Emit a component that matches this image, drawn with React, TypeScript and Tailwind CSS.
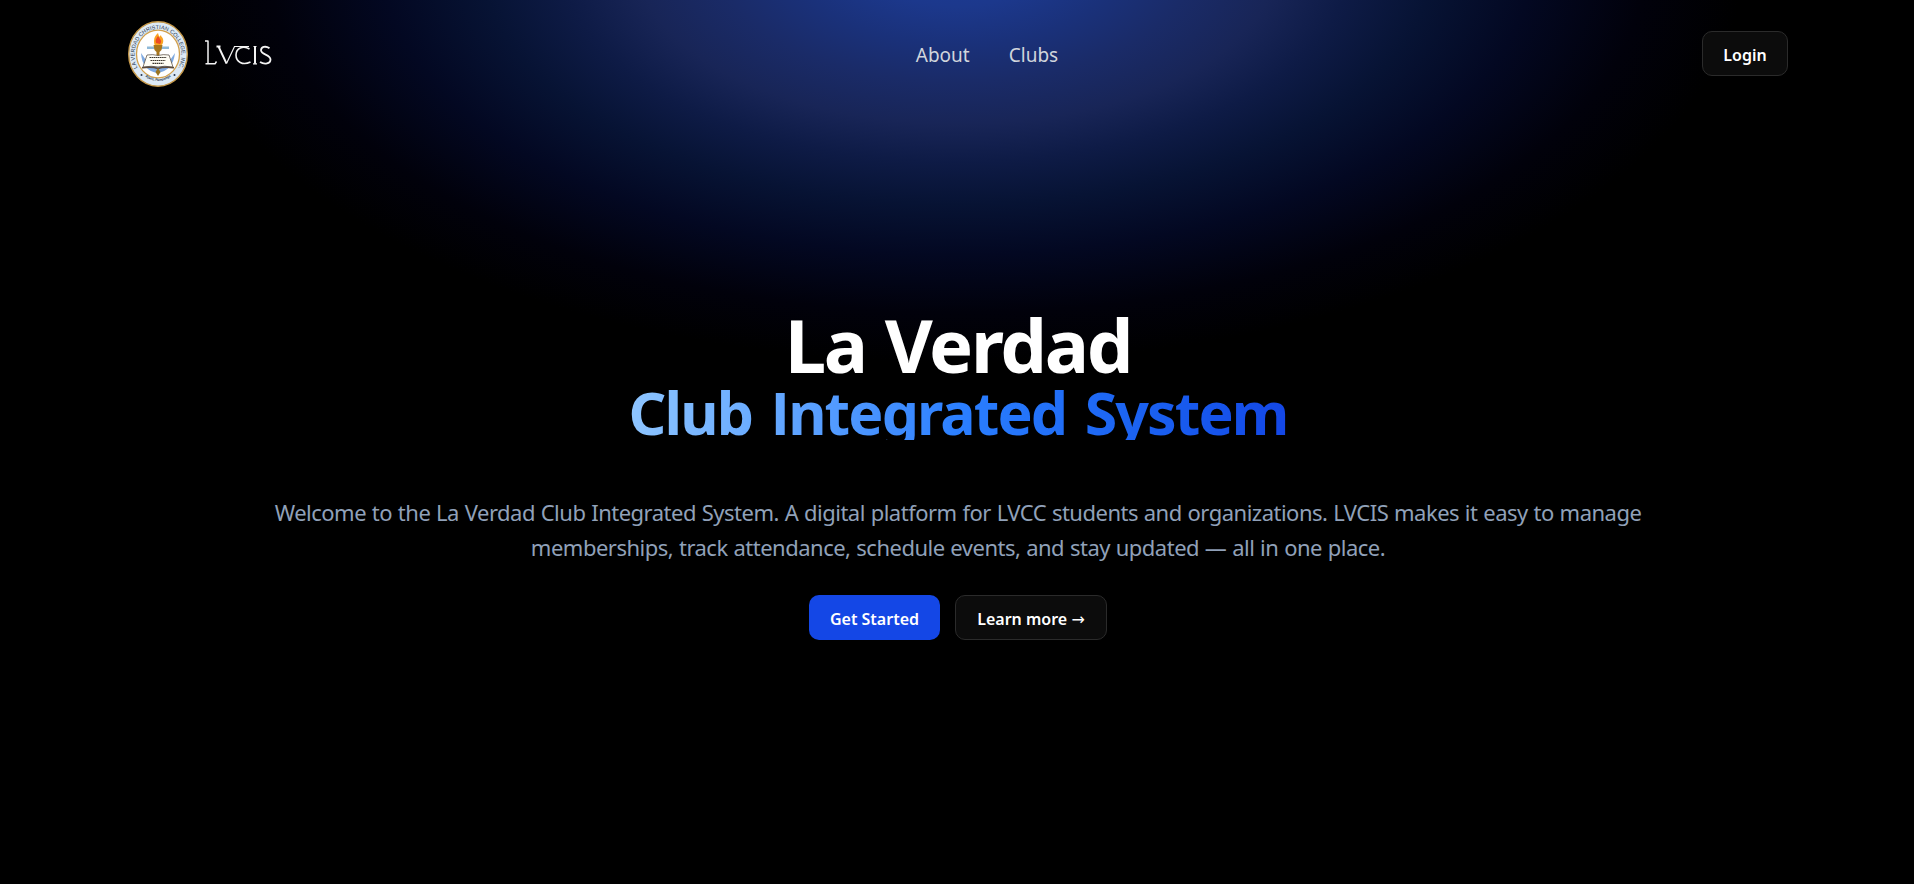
import React from "react";

const glow =
  "bg-[radial-gradient(ellipse_820px_420px_at_50%_-40px,#1c3c98_0%,#1c388c_11%,#1a317a_20%,#1a2b68_29%,#182557_39%,#0e1b46_48%,#071334_58%,#030822_70%,#01010b_84%,#000000_96%)]";

function Seal() {
  return (
    <svg className="h-[66px] w-[60px]" viewBox="0 0 60 66" preserveAspectRatio="none">
      <defs>
        <path id="ring" d="M11.2 49.500 A23.500 26 0 1 1 48.800 49.500" />
        <path id="base" d="M13 52 Q30 68 47 52" />
      </defs>
      <ellipse cx="30" cy="33" rx="29.3" ry="32.2" fill="#dce9f5" stroke="#c79a4b" strokeWidth="1.4" />
      <ellipse cx="30" cy="33" rx="21.500" ry="23.800" fill="#ffffff" stroke="#d2a04c" strokeWidth="1.300" />
      <text className="font-['Liberation_Sans']" fontSize="5.500" fill="#27364e">
        <textPath href="#ring" startOffset="50%" textAnchor="middle">LA VERDAD CHRISTIAN COLLEGE, INC.</textPath>
      </text>
      <text className="font-['Liberation_Sans']" fontSize="3.300" fontWeight="700" fill="#27364e">
        <textPath href="#base" startOffset="50%" textAnchor="middle">Apalit, Pampanga</textPath>
      </text>
      <path d="M13 32 Q14 49 29 52 Q45 50 47 32 L40 42 H20Z" fill="#7fa9e0" />
      <path d="M19 25.500h9v2.500h-9zM32 25.500h9v2.500h-9z" fill="#8fb9d8" />
      <path d="M30 12c-2 2-4 4-4 8s1 5 4 6c4-1 6-4 5-8-.5-2-2-2-2-4-1 1-1.500 1.500-1.500 2-.5-1-1-2-1.500-4z" fill="#f9a322" />
      <path d="M30 15c-2 3-3 4-2 7l4 1c2-2 1-4 0-5z" fill="#ec4a25" />
      <path d="M25.500 24h9l-1 5-2 2v5h-3v-5l-2-2z" fill="#a8761c" />
      <path d="M19 34 Q25 33 30 34.500 Q35 33 41 34 L45 46 Q36 44.500 30 46 Q24 44.500 15 46Z" fill="#fffdf4" stroke="#4f4238" strokeWidth=".7" />
      <path d="M14 46.800 Q24 45.500 30 47.500 Q36 45.500 46 46.800" fill="none" stroke="#5c4a3a" strokeWidth="1.500" />
      <path d="M21.500 36.500h17M22.500 39.500h15M24.500 42.300h11" stroke="#3a342c" strokeWidth="1.200" strokeDasharray="1.600 .5" />
      <path d="M30 47l2.500 4-2.500 4-2.500-4z" fill="#9a7420" />
      <circle cx="13.500" cy="54" r="1" fill="#27364e" />
      <circle cx="46.500" cy="54" r="1" fill="#27364e" />
    </svg>
  );
}

function Wordmark() {
  return (
    <svg role="img" aria-label="LVCIS" className="ml-[17px] h-[28px] w-[68px]" viewBox="0 0 68 28" fill="none" stroke="#f4f4f4">
      <path d="M0 1h3.500M3 1V23.500M.5 23.800H10L11.500 21.500" strokeWidth="1.500" />
      <path d="M11.500 6.500h4M13.500 6.500l8 17" strokeWidth="1.900" />
      <path d="M21.500 23.500 29.500 6.500H44" strokeWidth="1.200" />
      <path d="M44.500 9C38 5 31 8.500 31 15s6.500 11 14.500 7" strokeWidth="1.600" />
      <path d="M50 6.500v17.300" strokeWidth="2" />
      <path d="M48.500 6.500h3M48 23.800h4" strokeWidth="1.200" />
      <path d="M64.500 8.300c-4-2.800-8.500-1.500-8.500 2 0 4.300 9.500 4.500 9.500 9.200 0 4.300-6 5.300-10.500 2.500" strokeWidth="1.800" />
    </svg>
  );
}

export default function App() {
  return (
    <div className={`flex h-[884px] w-full flex-col overflow-hidden bg-black font-['Noto_Sans',sans-serif] text-white ${glow}`}>
      <header className="grid h-[107px] grid-cols-[1fr_auto_1fr] items-center pr-[126px] pl-32">
        <a href="#" className="flex items-center">
          <Seal />
          <Wordmark />
        </a>
        <nav className="flex gap-[39px] pt-[4px] pl-[58px] text-[19px] text-gray-300">
          <a href="#about">About</a>
          <a href="#clubs">Clubs</a>
        </nav>
        <button className="h-[45px] w-[86px] justify-self-end rounded-[10px] border border-[#2b2b2b] bg-[#0c0c0c] pt-[2px] text-base font-semibold">
          Login
        </button>
      </header>
      <main className="flex flex-col items-center pt-[201px] pl-[2px]">
        <h1 className="flex flex-col items-center font-bold whitespace-nowrap">
          <span className="pt-[2px] text-[74px] leading-[70px] tracking-[-2.3px] [word-spacing:2px]">La Verdad</span>
          <span className="bg-linear-to-r from-[#8ec5ff] via-[#2b7fff] to-[#1447e6] bg-clip-text pt-[5px] text-[59px] leading-[55px] tracking-[-1.9px] text-transparent [word-spacing:5px]">
            Club <span className="font-['Open_Sans']">I</span>ntegrated System
          </span>
        </h1>
        <p className="mt-[55px] flex flex-col items-center text-[22px] leading-[35px] tracking-[-0.5px] whitespace-nowrap text-[#90a1b9] [word-spacing:0.55px]">
          <span>Welcome to the La Verdad Club Integrated System. A digital platform for LVCC students and organizations. LVCIS makes it easy to manage</span>
          <span>memberships, track attendance, schedule events, and stay updated — all in one place.</span>
        </p>
        <div className="mt-[30px] flex gap-[15px] text-base font-semibold">
          <button className="h-[45px] w-[131px] rounded-[10px] bg-[#1447e6] pt-[2px]">Get Started</button>
          <button className="h-[45px] w-[152px] rounded-[10px] border border-[#2b2b2b] bg-[#0c0c0c] pt-[2px] whitespace-nowrap">
            Learn more <span className="font-['DejaVu_Sans'] text-base leading-none font-normal">→</span>
          </button>
        </div>
      </main>
    </div>
  );
}
